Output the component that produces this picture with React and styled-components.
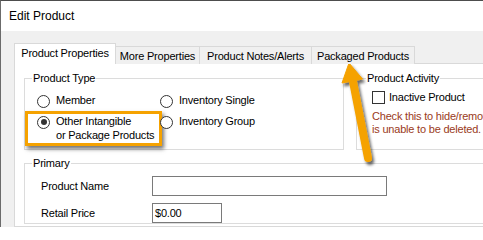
import React from 'react';
import styled, { createGlobalStyle } from 'styled-components';

const GlobalStyle = createGlobalStyle`
  html, body {
    margin: 0;
    padding: 0;
    background: #ffffff;
  }
  body {
    font-family: "Liberation Sans", Arial, sans-serif;
  }
`;

const Window = styled.div`
  position: relative;
  width: 483px;
  height: 227px;
  box-sizing: border-box;
  overflow: hidden;
  display: flex;
  flex-direction: column;
  border-top: 1px solid #4d4d4d;
  border-left: 1px solid #6b6b6b;
  background: #f0f0f0;
  color: #000000;
  font-size: 11px;
  letter-spacing: -0.2px;
`;

const TitleBar = styled.div`
  flex: 0 0 30px;
  display: flex;
  align-items: center;
  padding-left: 8px;
  background: #ffffff;
  font-size: 12px;
  letter-spacing: 0;
`;

const Client = styled.div`
  flex: 1;
  display: flex;
  flex-direction: column;
  padding: 12px 0 0 13px;
  min-height: 0;
`;

const TabStrip = styled.div`
  position: relative;
  z-index: 1;
  display: flex;
  align-items: flex-end;
  height: 21px;
  margin-bottom: -1px;
`;

const Tab = styled.div`
  box-sizing: border-box;
  width: ${(p) => p.width}px;
  height: ${(p) => (p.active ? 21 : 18)}px;
  display: flex;
  align-items: center;
  justify-content: center;
  padding-bottom: ${(p) => (p.active ? 2 : 0)}px;
  border: 1px solid #d9d9d9;
  border-bottom: none;
  background: ${(p) => (p.active ? '#ffffff' : '#f0f0f0')};
  & + & {
    margin-left: -1px;
  }
`;

const Panel = styled.div`
  flex: 1;
  width: 600px;
  box-sizing: border-box;
  background: #ffffff;
  border: 1px solid #d9d9d9;
  padding: 8px 0 0 9px;
`;

const TopRow = styled.div`
  display: flex;
  gap: 12px;
`;

const Group = styled.fieldset`
  margin: 0;
  padding: 0;
  box-sizing: border-box;
  width: ${(p) => p.width}px;
  min-width: 0;
  border: 1px solid #dcdcdc;
  legend {
    margin-left: ${(p) => p.legendOffset || 7}px;
    padding: 0 1px;
    line-height: 13px;
    font-size: 11px;
  }
`;

const PrimaryGroup = styled(Group)`
  margin-top: 7px;
`;

const TypeGrid = styled.div`
  display: grid;
  grid-template-columns: 123px auto;
  row-gap: 7.5px;
  align-items: start;
  padding: 9px 0 7px 12px;
`;

const RadioItem = styled.label`
  position: relative;
  display: flex;
  align-items: flex-start;
  gap: 6px;
  line-height: 13.5px;
`;

const Highlight = styled(RadioItem)`
  &::before {
    content: '';
    position: absolute;
    top: -4px;
    bottom: -4px;
    left: -12px;
    right: -2px;
    border: 3px solid #f5a200;
    box-shadow: 2px 3px 4px rgba(0, 0, 0, 0.55);
  }
`;

const RadioCircle = styled.span`
  position: relative;
  flex: 0 0 13px;
  height: 13px;
  box-sizing: border-box;
  margin-top: 0.5px;
  border: 1px solid #333333;
  border-radius: 50%;
  background: #ffffff;
  &::after {
    content: '';
    display: ${(p) => (p.checked ? 'block' : 'none')};
    position: absolute;
    top: 2.5px;
    left: 2.5px;
    width: 6px;
    height: 6px;
    border-radius: 50%;
    background: #333333;
  }
`;

const ActivityBody = styled.div`
  padding: 6px 0 0 15px;
`;

const CheckRow = styled.label`
  display: flex;
  align-items: center;
  gap: 4px;
  height: 13px;
  line-height: 13px;
`;

const CheckBox = styled.span`
  width: 13px;
  height: 13px;
  box-sizing: border-box;
  border: 1px solid #333333;
  background: #ffffff;
`;

const Hint = styled.div`
  margin-top: 6px;
  color: #9a3a22;
  line-height: 12.5px;
  white-space: nowrap;
`;

const FieldGrid = styled.div`
  display: grid;
  grid-template-columns: 111px auto;
  row-gap: 7px;
  align-items: center;
  padding: 6px 0 0 16px;
`;

const FieldLabel = styled.span`
  line-height: 13px;
`;

const TextBox = styled.div`
  box-sizing: border-box;
  width: ${(p) => p.width}px;
  height: 20px;
  padding: 0 2px;
  display: flex;
  align-items: center;
  border: 1px solid #7a7a7a;
  background: #ffffff;
`;

const Arrow = styled.svg`
  position: absolute;
  left: -1px;
  top: -1px;
  width: 483px;
  height: 227px;
  pointer-events: none;
`;

const tabs = [
  { label: 'Product Properties', width: 102, active: true },
  { label: 'More Properties', width: 85 },
  { label: 'Product Notes/Alerts', width: 113 },
  { label: 'Packaged Products', width: 104 },
];

const App = () => (
  <>
    <GlobalStyle />
    <Window>
      <TitleBar>Edit Product</TitleBar>
      <Client>
        <TabStrip>
          {tabs.map((t) => (
            <Tab key={t.label} width={t.width} active={t.active}>
              {t.label}
            </Tab>
          ))}
        </TabStrip>
        <Panel>
          <TopRow>
            <Group width={320}>
              <legend>Product Type</legend>
              <TypeGrid>
                <RadioItem>
                  <RadioCircle />
                  <span>Member</span>
                </RadioItem>
                <RadioItem>
                  <RadioCircle />
                  <span>Inventory Single</span>
                </RadioItem>
                <Highlight>
                  <RadioCircle checked />
                  <span>
                    Other Intangible
                    <br />
                    or Package Products
                  </span>
                </Highlight>
                <RadioItem>
                  <RadioCircle />
                  <span>Inventory Group</span>
                </RadioItem>
              </TypeGrid>
            </Group>
            <Group width={240} legendOffset={9}>
              <legend>Product Activity</legend>
              <ActivityBody>
                <CheckRow>
                  <CheckBox />
                  <span>Inactive Product</span>
                </CheckRow>
                <Hint>
                  Check this to hide/remove this product if it
                  <br />
                  is unable to be deleted.
                </Hint>
              </ActivityBody>
            </Group>
          </TopRow>
          <PrimaryGroup width={560}>
            <legend>Primary</legend>
            <FieldGrid>
              <FieldLabel>Product Name</FieldLabel>
              <TextBox width={235} />
              <FieldLabel>Retail Price</FieldLabel>
              <TextBox width={70}>$0.00</TextBox>
            </FieldGrid>
          </PrimaryGroup>
        </Panel>
      </Client>
      <Arrow viewBox="0 0 483 227">
        <defs>
          <filter id="arrowShadow" x="-50%" y="-20%" width="200%" height="140%">
            <feDropShadow dx="2" dy="3" stdDeviation="1.5" floodColor="#000" floodOpacity="0.6" />
          </filter>
        </defs>
        <g filter="url(#arrowShadow)" fill="#f5a200" stroke="#f5a200">
          <line x1="368" y1="158" x2="352.5" y2="79" strokeWidth="8" strokeLinecap="round" />
          <polygon points="349,63 362.5,79 342,83" strokeWidth="1" strokeLinejoin="round" />
        </g>
      </Arrow>
    </Window>
  </>
);

export default App;
